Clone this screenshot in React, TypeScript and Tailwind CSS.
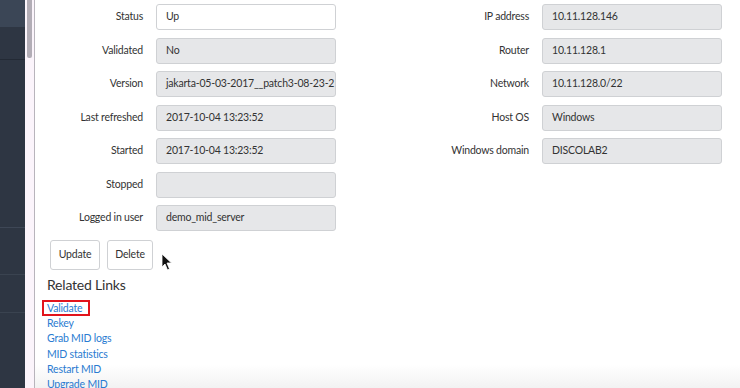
const left = [
  { label: "Status", value: "Up", editable: true },
  { label: "Validated", value: "No" },
  { label: "Version", value: "jakarta-05-03-2017__patch3-08-23-2" },
  { label: "Last refreshed", value: "2017-10-04 13:23:52" },
  { label: "Started", value: "2017-10-04 13:23:52" },
  { label: "Stopped", value: "" },
  { label: "Logged in user", value: "demo_mid_server" },
];

const right = [
  { label: "IP address", value: "10.11.128.146" },
  { label: "Router", value: "10.11.128.1" },
  { label: "Network", value: "10.11.128.0/22" },
  { label: "Host OS", value: "Windows" },
  { label: "Windows domain", value: "DISCOLAB2" },
];

const links = ["Validate", "Rekey", "Grab MID logs", "MID statistics", "Restart MID", "Upgrade MID"];

type Field = { label: string; value: string; editable?: boolean };

const FieldRow = ({ f, labelW }: { f: Field; labelW: string }) => (
  <div className="flex items-center">
    <div className={`${labelW} pr-[13px] text-right text-[10.5px] tracking-[-0.2px] text-[#333]`}>{f.label}</div>
    <div
      className={`flex h-[26px] w-[180px] items-center overflow-hidden whitespace-nowrap rounded-[3px] border border-[#cfd1d4] px-[9px] text-[10.5px] tracking-[-0.2px] text-[#333] ${
        f.editable ? "bg-white" : "bg-[#e6e7e9]"
      }`}
    >
      {f.value}
    </div>
  </div>
);

export default function App() {
  return (
    <div className="flex h-[388px] w-[740px] overflow-hidden bg-white font-['Lato',sans-serif]">
      {/* dark nav strip */}
      <div className="flex w-[25px] flex-col bg-[#2e3643]">
        <div className="h-[27px] bg-[#3b4656]" />
        <div className="h-[33px] border-b border-[#232a35]" />
        <div className="h-[168px] border-b border-[#3e4756]" />
        <div className="h-[47px] border-b border-[#3a4350]" />
        <div className="h-[38px] border-b border-[#3a4350]" />
        <div className="flex-1" />
      </div>
      {/* scrollbar */}
      <div className="flex w-[10px] justify-center border-r border-[#b8b4bc] bg-[#fbf4fb]">
        <div className="h-[58px] w-[5px] rounded-b-[2px] bg-[#b2adb6]" />
      </div>

      <div className="relative flex-1 bg-gradient-to-b from-white from-[94%] to-[#f2f2f2]">
        <div className="flex pt-[4px]">
          <div className="flex flex-col gap-[7.5px]">
            {left.map((f) => (
              <FieldRow key={f.label} f={f} labelW="w-[121px]" />
            ))}
          </div>
          <div className="ml-[72px] flex flex-col gap-[7.5px]">
            {right.map((f) => (
              <FieldRow key={f.label} f={f} labelW="w-[134px]" />
            ))}
          </div>
        </div>

        <div className="ml-[15px] mt-[9px] flex gap-[7px]">
          <button className="h-[30px] w-[50px] rounded-[3px] border border-[#cfd1d4] bg-white text-[10.5px] tracking-[-0.2px] text-[#333]">
            Update
          </button>
          <button className="h-[30px] w-[46px] rounded-[3px] border border-[#cfd1d4] bg-white text-[10.5px] tracking-[-0.2px] text-[#333]">
            Delete
          </button>
        </div>

        <div className="ml-[12px] mt-[4px] text-[14px] tracking-[-0.2px] text-[#333]">Related Links</div>
        <div className="ml-[12px] mt-[6px] flex flex-col text-[10.5px] leading-[15.2px] tracking-[-0.2px] text-[#2a7bd1]">
          {links.map((l, i) => (
            <span key={l} className={i === 0 ? "relative w-fit" : "w-fit"}>
              {l}
              {i === 0 && (
                <span className="absolute -left-[5px] -right-[8px] -top-[1px] bottom-0 border-2 border-[#e2141c]" />
              )}
            </span>
          ))}
        </div>

        {/* mouse cursor */}
        <svg className="absolute left-[126px] top-[253px]" width="12" height="18" viewBox="0 0 12 18">
          <path d="M1 1 L1 14 L4 11 L6.5 17 L8.5 16 L6 10 L10.5 10 Z" fill="#111" stroke="#fff" strokeWidth="0.8" />
        </svg>
      </div>
    </div>
  );
}
